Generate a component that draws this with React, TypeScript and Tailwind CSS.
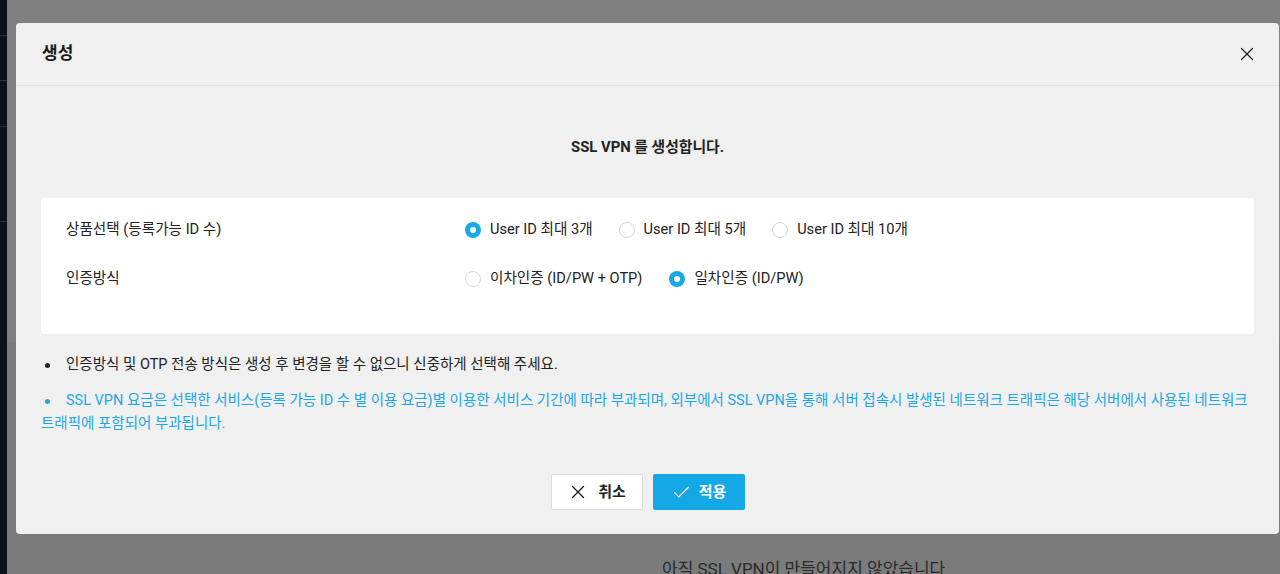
import { X, Check } from "lucide-react";

const font = { fontFamily: "Roboto, 'Noto Sans CJK KR', 'Noto Sans', sans-serif" };

function Radio({ checked, label }: { checked?: boolean; label: string }) {
  return (
    <label className="flex items-center gap-[9px] text-[14.6px] text-[#222]">
      {checked ? (
        <span className="flex h-[16px] w-[16px] items-center justify-center rounded-full bg-[#18a8e6]">
          <span className="h-[6px] w-[6px] rounded-full bg-white" />
        </span>
      ) : (
        <span className="h-[16px] w-[16px] rounded-full border border-[#d6d6d6] bg-white" />
      )}
      <span>{label}</span>
    </label>
  );
}

function Dot() {
  return (
    <span className="inline-flex w-[25px] items-center pl-[4px] align-middle">
      <span className="h-[5px] w-[5px] rounded-full bg-current" />
    </span>
  );
}

export default function App() {
  return (
    <div className="relative h-[574px] w-[1280px] overflow-hidden bg-[#808080]" style={font}>
      {/* page underneath the overlay */}
      <div className="flex h-full">
        <div className="flex w-[7px] flex-col bg-[#0e1117]">
          <div className="mt-[35px] h-px bg-[#1f3545]" />
          <div className="mt-[44px] h-px bg-[#1f3545]" />
          <div className="mt-[45px] h-px bg-[#1f3545]" />
          <div className="mt-[94px] h-px bg-[#1f3545]" />
        </div>
        <div className="flex flex-1 flex-col">
          <div className="h-[342px] shrink-0" />
          <div className="flex-1 bg-[#7b7b7b] pl-[655px] pt-[215px] text-[17px] leading-[25px] text-[#2a2a2a]">
            아직 SSL VPN이 만들어지지 않았습니다
          </div>
        </div>
      </div>

      {/* modal */}
      <div className="absolute left-[16px] top-[23px] flex h-[511px] w-[1263px] flex-col rounded-[4px] bg-[#f0f0f0]">
        <div className="flex h-[63px] items-center justify-between border-b border-[#e2e2e2] pl-[26px] pr-[21px]">
          <h2 className="text-[17px] font-bold text-[#1a1a1a]">생성</h2>
          <X size={22} strokeWidth={1.4} className="text-[#222]" />
        </div>

        <div className="flex flex-col px-[25px]">
          <p className="pt-[51px] text-center text-[14.8px] font-bold leading-[20px] text-[#222]">
            SSL VPN 를 생성합니다.
          </p>

          <div className="mt-[41px] flex h-[136px] flex-col gap-[25px] rounded-[3px] bg-white pl-[25px] pt-[20px]">
            <div className="flex h-[24px] items-center">
              <div className="w-[399px] text-[14.6px] text-[#222]">상품선택 (등록가능 ID 수)</div>
              <div className="flex items-center gap-[26px]">
                <Radio checked label="User ID 최대 3개" />
                <Radio label="User ID 최대 5개" />
                <Radio label="User ID 최대 10개" />
              </div>
            </div>
            <div className="flex h-[24px] items-center">
              <div className="w-[399px] text-[14.6px] text-[#222]">인증방식</div>
              <div className="flex items-center gap-[27px]">
                <Radio label="이차인증 (ID/PW + OTP)" />
                <Radio checked label="일차인증 (ID/PW)" />
              </div>
            </div>
          </div>

          <ul className="mt-[19px] flex flex-col gap-[13px] text-[14.5px] leading-[23px]">
            <li className="text-[#222]">
              <Dot />
              인증방식 및 OTP 전송 방식은 생성 후 변경을 할 수 없으니 신중하게 선택해 주세요.
            </li>
            <li className="text-[#1ba7e3]">
              <Dot />
              SSL VPN 요금은 선택한 서비스(등록 가능 ID 수 별 이용 요금)별 이용한 서비스 기간에 따라 부과되며, 외부에서 SSL VPN을 통해 서버 접속시 발생된 네트워크 트래픽은 해당 서버에서 사용된 네트워크 트래픽에 포함되어 부과됩니다.
            </li>
          </ul>

          <div className="mt-[39px] flex justify-center gap-[10px]">
            <button className="flex h-[36px] w-[92px] items-center justify-center gap-[9px] rounded-[2px] border border-[#dcdcdc] bg-white text-[15px] font-bold text-[#222]">
              <X size={22} strokeWidth={1.5} />
              취소
            </button>
            <button className="flex h-[36px] w-[92px] items-center justify-center gap-[7px] rounded-[2px] bg-[#14a8e6] text-[15px] font-bold text-white">
              <Check size={21} strokeWidth={1.3} />
              적용
            </button>
          </div>
        </div>
      </div>
    </div>
  );
}
